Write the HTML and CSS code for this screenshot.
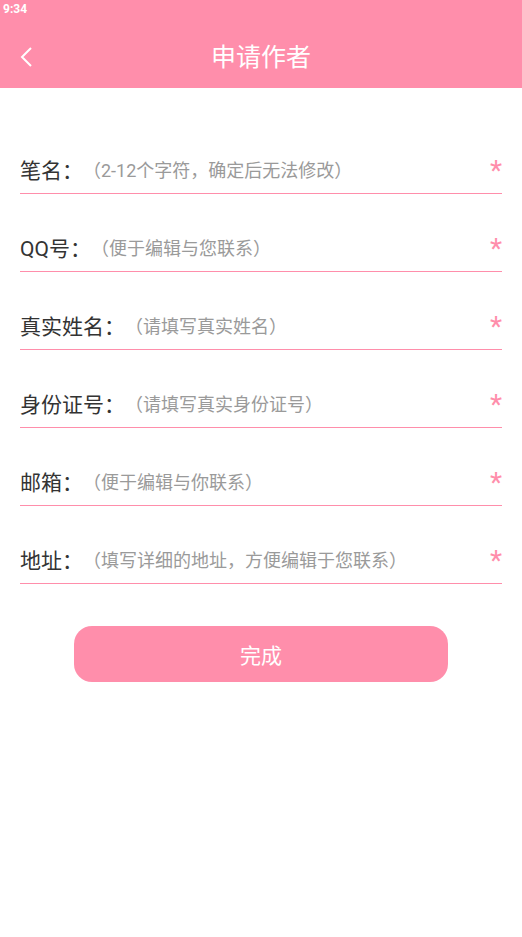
FILE: index.html
```html
<!DOCTYPE html>
<html lang="zh-CN">
<head>
<meta charset="utf-8">
<title>申请作者</title>
<link rel="stylesheet" href="styles.css">
</head>
<body>
<header class="header">
  <div class="status">9:34</div>
  <div class="toolbar">
    <span class="back">
      <svg width="12" height="20" viewBox="0 0 12 20"><polyline points="11,1 2,10 11,19" fill="none" stroke="#fff" stroke-width="2"/></svg>
    </span>
    <h1 class="title">申请作者</h1>
  </div>
</header>
<main class="form">
  <div class="row"><span class="label">笔名：</span><input class="field" placeholder="（2-12个字符，确定后无法修改）"><span class="req">*</span></div>
  <div class="row"><span class="label">QQ号：</span><input class="field" placeholder="（便于编辑与您联系）"><span class="req">*</span></div>
  <div class="row"><span class="label">真实姓名：</span><input class="field" placeholder="（请填写真实姓名）"><span class="req">*</span></div>
  <div class="row"><span class="label">身份证号：</span><input class="field" placeholder="（请填写真实身份证号）"><span class="req">*</span></div>
  <div class="row"><span class="label">邮箱：</span><input class="field" placeholder="（便于编辑与你联系）"><span class="req">*</span></div>
  <div class="row"><span class="label">地址：</span><input class="field" placeholder="（填写详细的地址，方便编辑于您联系）"><span class="req">*</span></div>
  <button class="submit" type="button">完成</button>
</main>
</body>
</html>
```
FILE: styles.css
```css
* { box-sizing: border-box; }
html, body { margin: 0; padding: 0; background: #fff; }
body {
  font-family: Roboto, "Noto Sans CJK SC", sans-serif;
  width: 522px;
}
.header {
  background: #ff8eab;
  height: 88px;
  color: #fff;
}
.status {
  height: 26px;
  padding-left: 3px;
  font-size: 12px;
  font-weight: bold;
  line-height: 18px;
}
.toolbar {
  height: 62px;
  display: flex;
  align-items: center;
  justify-content: center;
  position: relative;
}
.back {
  position: absolute;
  left: 20px;
  top: 21px;
  width: 12px;
  height: 20px;
  display: block;
}
.back svg { display: block; }
.title {
  margin: 0;
  font-size: 25px;
  font-weight: normal;
  line-height: 30px;
  padding-top: 2px;
}
.form {
  padding: 28px 20px 0;
  display: flex;
  flex-direction: column;
}
.row {
  height: 78px;
  display: flex;
  align-items: flex-end;
  padding-bottom: 7px;
  border-bottom: 1px solid #ff8eab;
}
.label {
  font-size: 21px;
  line-height: 30px;
  color: #333;
  white-space: nowrap;
}
.field {
  flex: 1;
  min-width: 0;
  border: 0;
  outline: none;
  background: transparent;
  font-family: inherit;
  font-size: 18px;
  line-height: 30px;
  height: 30px;
  padding: 0;
  color: #333;
}
.field::placeholder { color: #9a9a9a; }
.req {
  color: #ff8eab;
  font-size: 28px;
  line-height: 30px;
}
.submit {
  margin: 42px auto 0;
  width: 374px;
  height: 56px;
  border: none;
  border-radius: 18px;
  background: #ff8eab;
  color: #fff;
  font-family: inherit;
  font-size: 21px;
}
```
